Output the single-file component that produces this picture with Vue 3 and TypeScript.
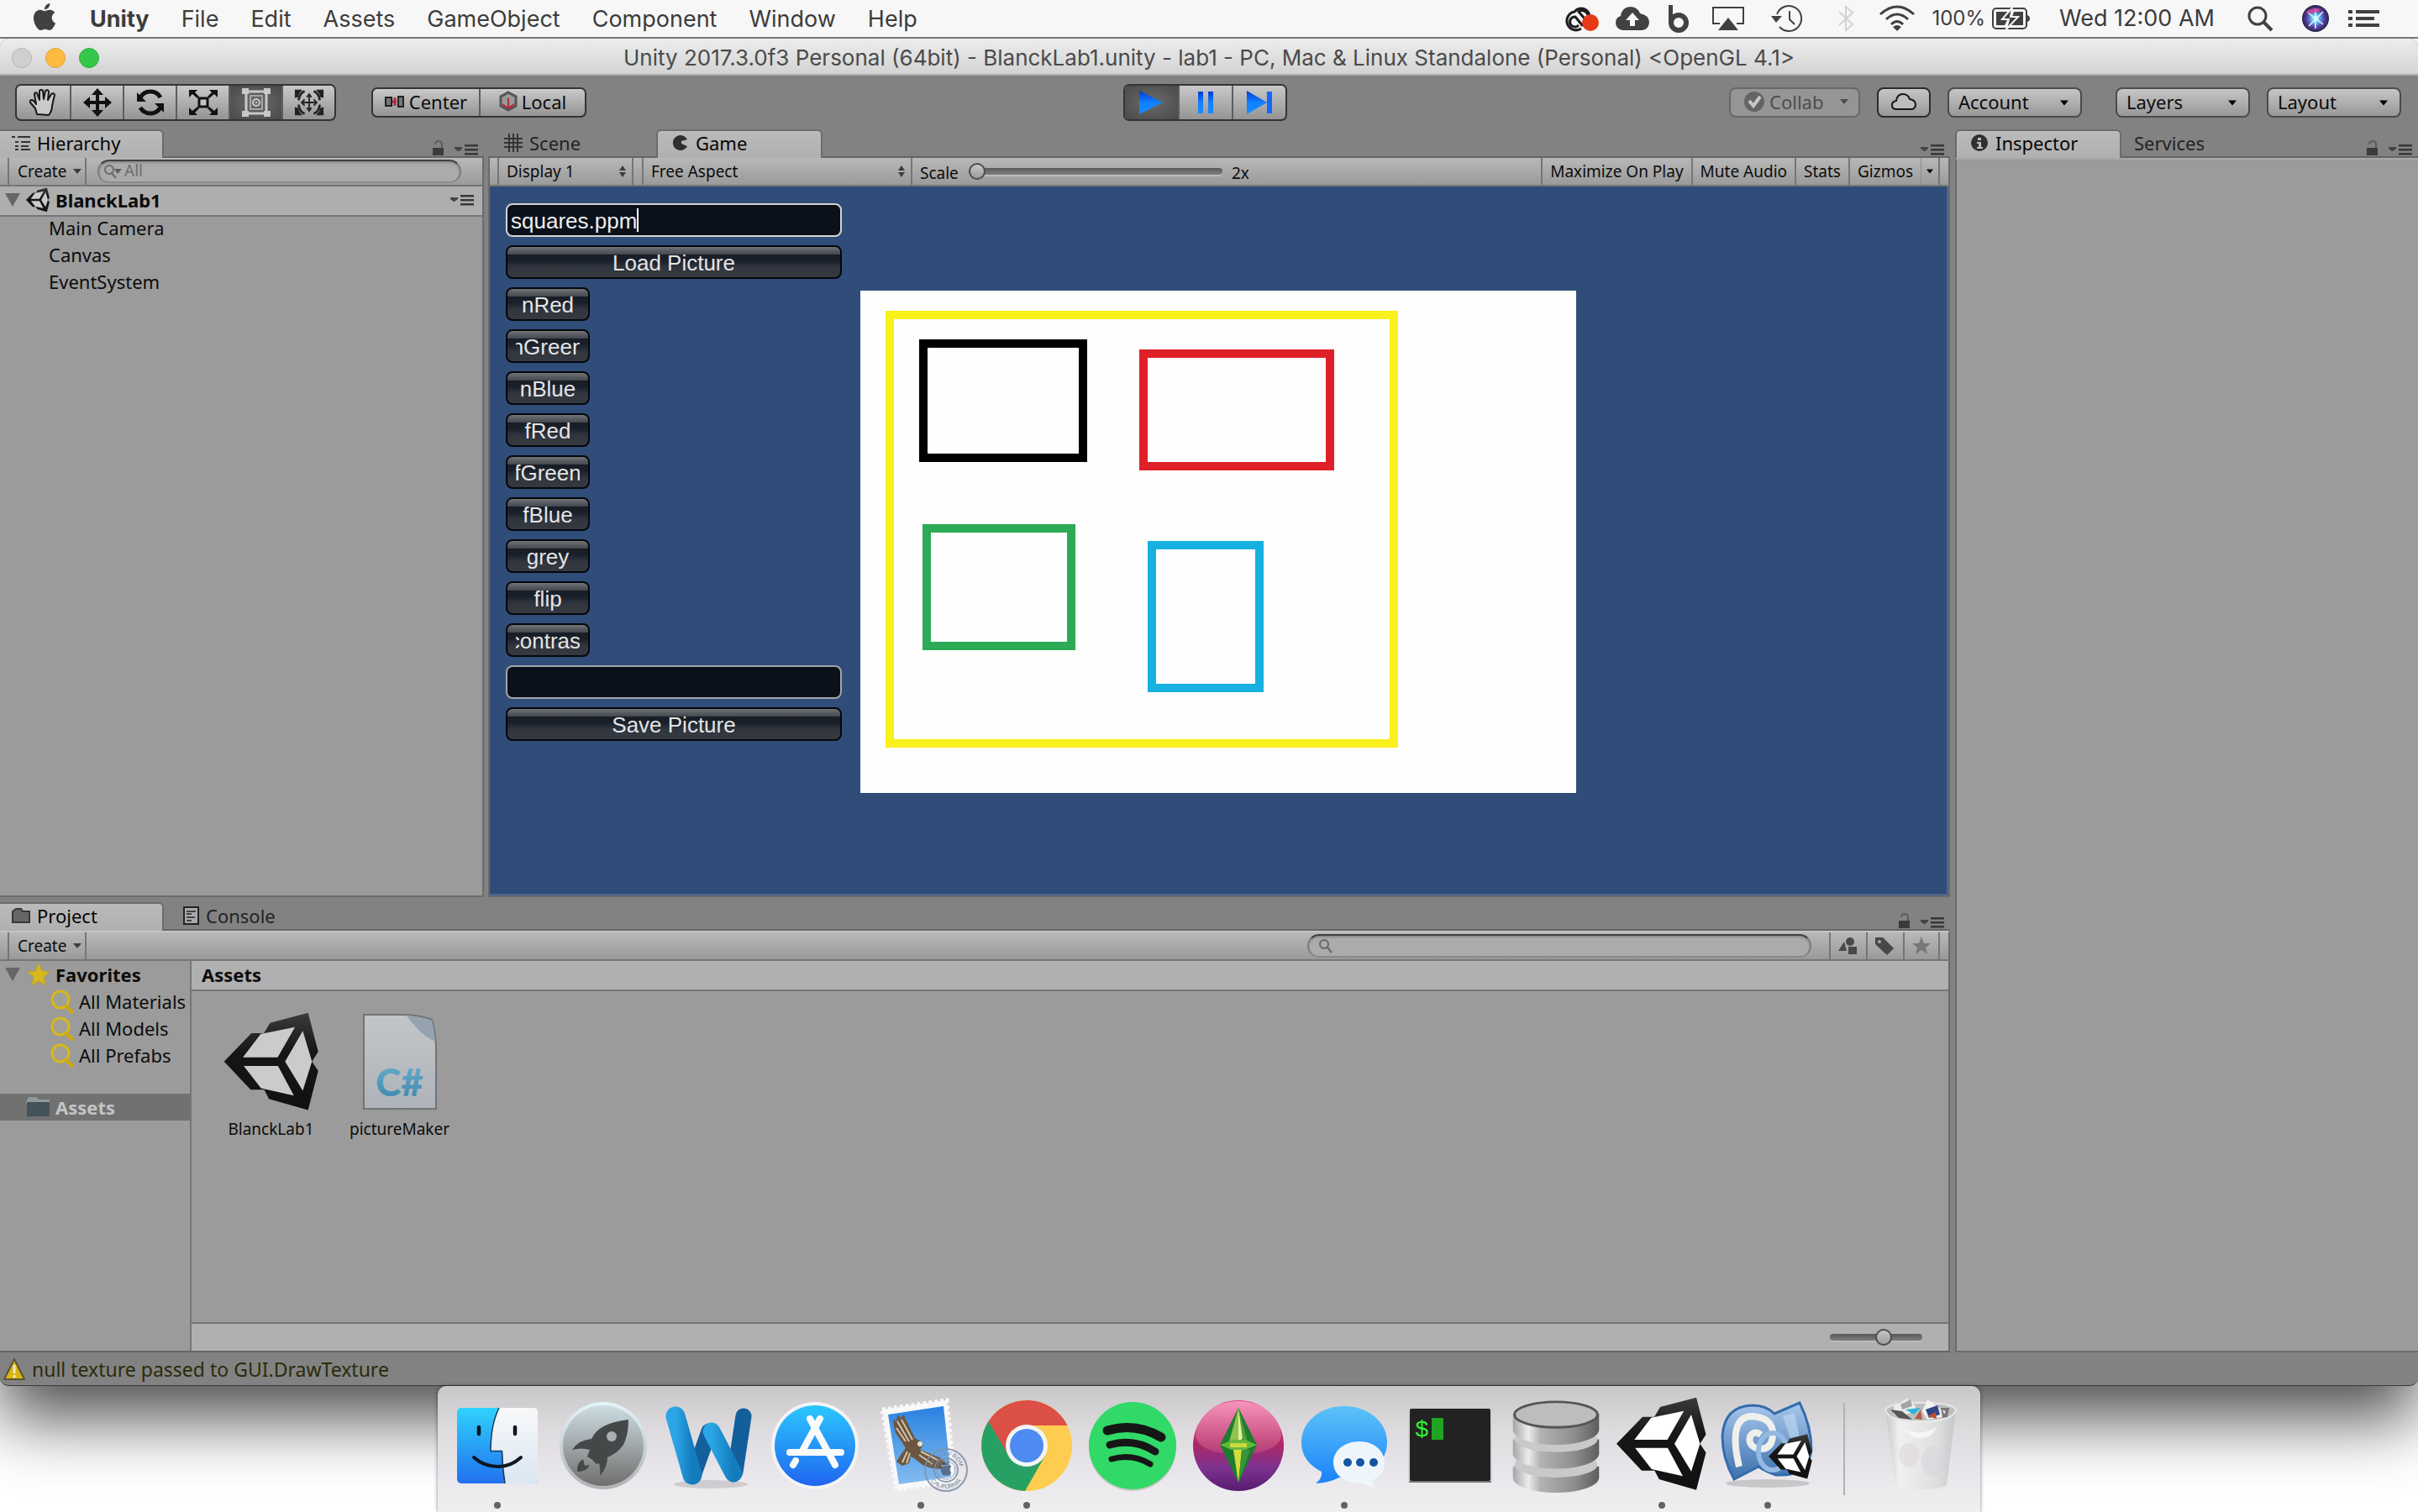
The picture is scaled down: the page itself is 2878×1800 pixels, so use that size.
<script setup lang="ts">
import { ref } from 'vue'

interface DockApp {
  id: string
  name: string
  running: boolean
}

const menus: string[] = ['File', 'Edit', 'Assets', 'GameObject', 'Component', 'Window', 'Help']
const tools: string[] = ['hand', 'move', 'rotate', 'scale', 'rect', 'transform']
const activeTool = ref('rect')
const sceneObjects: string[] = ['Main Camera', 'Canvas', 'EventSystem']
const filters: string[] = ['nRed', 'nGreen', 'nBlue', 'fRed', 'fGreen', 'fBlue', 'grey', 'flip', 'contrast']
const favorites: string[] = ['All Materials', 'All Models', 'All Prefabs']
const gameToggles: string[] = ['Maximize On Play', 'Mute Audio', 'Stats']
const loadName = ref('squares.ppm')
const saveName = ref('')
const zoom = ref(0)
const thumbSize = ref(60)

const apps: DockApp[] = [
  { id: 'finder', name: 'Finder', running: true },
  { id: 'launchpad', name: 'Launchpad', running: false },
  { id: 'word', name: 'Word', running: false },
  { id: 'appstore', name: 'App Store', running: false },
  { id: 'mail', name: 'Mail', running: true },
  { id: 'chrome', name: 'Chrome', running: true },
  { id: 'spotify', name: 'Spotify', running: false },
  { id: 'sims', name: 'The Sims', running: false },
  { id: 'messages', name: 'Messages', running: true },
  { id: 'terminal', name: 'Terminal', running: false },
  { id: 'database', name: 'Database', running: false },
  { id: 'unity', name: 'Unity', running: true },
  { id: 'mono', name: 'MonoDevelop', running: true },
]
</script>

<template>
  <div class="desktop">
    <!-- shared icon shapes -->
    <svg class="sprites" width="0" height="0" aria-hidden="true">
      <defs>
        <linearGradient id="gFinder" x1="0" y1="0" x2="0" y2="1"><stop offset="0" stop-color="#2fd3fd" /><stop offset="1" stop-color="#2270ee" /></linearGradient>
        <linearGradient id="gPale" x1="0" y1="0" x2="0" y2="1"><stop offset="0" stop-color="#f8f8f9" /><stop offset="1" stop-color="#dbe7f3" /></linearGradient>
        <linearGradient id="gLaunch" x1="0" y1="0" x2="0" y2="1"><stop offset="0" stop-color="#cddde3" /><stop offset=".5" stop-color="#a1a7aa" /><stop offset="1" stop-color="#6f6e6b" /></linearGradient>
        <linearGradient id="gRim" x1="0" y1="0" x2="0" y2="1"><stop offset="0" stop-color="#e4f5fa" /><stop offset="1" stop-color="#aeb2b4" /></linearGradient>
        <linearGradient id="gStore" x1="0" y1="0" x2="0" y2="1"><stop offset="0" stop-color="#2bc7fd" /><stop offset="1" stop-color="#1f66f0" /></linearGradient>
        <linearGradient id="gSky" x1="0" y1="0" x2="0" y2="1"><stop offset="0" stop-color="#2a81e2" /><stop offset="1" stop-color="#84bdf0" /></linearGradient>
        <linearGradient id="gSims" x1="0" y1="0" x2="0" y2="1"><stop offset="0" stop-color="#ee3f87" /><stop offset=".5" stop-color="#ad2768" /><stop offset=".74" stop-color="#7c3391" /><stop offset="1" stop-color="#571b70" /></linearGradient>
        <linearGradient id="gGloss" x1="0" y1="0" x2="0" y2="1"><stop offset="0" stop-color="#f5a0c2" stop-opacity=".9" /><stop offset="1" stop-color="#d06a92" stop-opacity=".35" /></linearGradient>
        <linearGradient id="gMsg" x1="0" y1="0" x2="0" y2="1"><stop offset="0" stop-color="#5cc3f8" /><stop offset="1" stop-color="#1b82fb" /></linearGradient>
        <linearGradient id="gMetal" x1="0" y1="0" x2="1" y2="0"><stop offset="0" stop-color="#a5a5a5" /><stop offset=".18" stop-color="#ececec" /><stop offset=".32" stop-color="#b2b2b2" /><stop offset=".7" stop-color="#909090" /><stop offset="1" stop-color="#5d5d5d" /></linearGradient>
        <linearGradient id="gDark" x1="0" y1="0" x2="0" y2="1"><stop offset="0" stop-color="#3a3a3a" /><stop offset=".4" stop-color="#161616" /><stop offset="1" stop-color="#111" /></linearGradient>
        <linearGradient id="gWordA" x1="0" y1="0" x2="1" y2="0"><stop offset="0" stop-color="#2aa5e6" /><stop offset="1" stop-color="#147bbd" /></linearGradient>
        <linearGradient id="gMono" x1="0" y1="0" x2="0" y2="1"><stop offset="0" stop-color="#a9c8ec" /><stop offset="1" stop-color="#3c70ae" /></linearGradient>
        <linearGradient id="gPlay" x1="0" y1="0" x2="0" y2="1"><stop offset="0" stop-color="#0439d6" /><stop offset=".5" stop-color="#1180ff" /><stop offset="1" stop-color="#178cff" /></linearGradient>
        <linearGradient id="gCup" x1="0" y1="0" x2="1" y2="0"><stop offset="0" stop-color="#c6c8ca" /><stop offset=".2" stop-color="#f0f0f0" /><stop offset=".75" stop-color="#dededf" /><stop offset="1" stop-color="#c4c5c7" /></linearGradient>
        <linearGradient id="gSheet" x1="0" y1="0" x2="0" y2="1"><stop offset="0" stop-color="#c3c6c8" /><stop offset="1" stop-color="#adb3b8" /></linearGradient>
        <linearGradient id="gSharp" x1="0" y1="0" x2="0" y2="1"><stop offset="0" stop-color="#69b0cf" /><stop offset="1" stop-color="#3d86aa" /></linearGradient>
        <radialGradient id="gSiri"><stop offset="0" stop-color="#e9fbff" /><stop offset=".3" stop-color="#4fc3e8" /><stop offset=".65" stop-color="#5a3fae" /><stop offset="1" stop-color="#23253f" /></radialGradient>
      </defs>

      <symbol id="unity" viewBox="3 -4 107 114">
        <path fill="url(#gDark)" d="M3 52.700 34 20.700H48L55 9 98 -2.300 109.500 41.700 102.400 52.700 109.500 63.300 98 107.700 53.700 95 48.400 84.700H33Z" />
        <path class="unity-face" d="M24.300 48 44.400 21.700 83.200 13.700 63.600 48ZM25.200 57.700H64L81.900 91.300 44.800 83ZM72 52.700 92 18 102.400 52.700 92 85.700Z" />
      </symbol>
      <symbol id="lock" viewBox="0 0 15 18">
        <path d="M1 9H14V18H1Z" fill="#3b3b3b" />
        <path d="M4 5Q4 1 8 1 12 1 12 5V9" fill="none" stroke="#5c5c5c" stroke-width="2" />
      </symbol>
      <symbol id="pane-menu" viewBox="0 0 28 13">
        <path d="M0 3H9V5L5 8H4L0 5Z" fill="#444" />
        <path d="M12 0H28V2.500H12ZM12 5H28V7.500H12ZM12 10H28V12.500H12Z" fill="#383838" />
      </symbol>
      <symbol id="tri" viewBox="0 0 10 6"><path d="M0 0H10L5 6Z" /></symbol>
      <symbol id="updown" viewBox="0 0 10 14"><path d="M5 0 9 6H1ZM1 8H9L5 14Z" fill="#3c3c3c" /></symbol>
      <symbol id="fold" viewBox="0 0 18 16"><path d="M0 0H18L9 16Z" fill="#666" /></symbol>
      <symbol id="lens" viewBox="0 0 20 20">
        <circle cx="8" cy="8" r="5" fill="none" stroke="#666" stroke-width="2" /><path d="M12 12 17 18" stroke="#666" stroke-width="2" />
      </symbol>
      <symbol id="lens-menu" viewBox="0 0 22 20">
        <circle cx="6" cy="8" r="5" fill="none" stroke="#6a6a6a" stroke-width="2" /><path d="M9 12 14 18" stroke="#6a6a6a" stroke-width="2" /><path d="M12 7H21L16 13Z" fill="#5d5d5d" />
      </symbol>
      <symbol id="gold-lens" viewBox="0 0 28 28">
        <circle cx="12" cy="12" r="10" fill="#a1a097" stroke="#d8b818" stroke-width="3" /><path d="M19 20 26 27" stroke="#d0a808" stroke-width="4" stroke-linecap="round" />
      </symbol>

      <symbol id="t-hand" viewBox="0 0 36 36">
        <path d="M10 32 8 25 2 18Q1 15 4 15 7 16 9 20L7 8Q8 5 10 7L13 15 13 4Q15 2 17 4L18 14 20 4Q23 2 24 5L23 15 27 8Q30 6 31 9L28 22Q28 28 24 33Z" fill="#c9c9c9" stroke="#161616" stroke-width="2" stroke-linejoin="round" />
      </symbol>
      <symbol id="t-move" viewBox="0 0 36 36">
        <path d="M18 1 25 9H20V16H27V11L35 18 27 25V20H20V27H25L18 35 11 27H16V20H9V25L1 18 9 11V16H16V9H11Z" fill="#111" />
      </symbol>
      <symbol id="t-rotate" viewBox="0 0 36 36">
        <path d="M6 12Q10 5 18 5 26 5 30 12" fill="none" stroke="#111" stroke-width="5" /><path d="M2 6V17H13Z" fill="#111" />
        <path d="M30 24Q26 31 18 31 10 31 6 24" fill="none" stroke="#111" stroke-width="5" /><path d="M34 30V19H23Z" fill="#111" />
      </symbol>
      <symbol id="t-scale" viewBox="0 0 36 36">
        <path d="M13 13H23V23H13Z" fill="#c4c4c4" stroke="#111" stroke-width="3" />
        <path d="M1 3H11L8 6 13 11 11 13 5 8 1 12ZM35 3H25L28 6 23 11 25 13 31 8 35 12ZM1 33H11L8 30 13 25 11 23 5 28 1 24ZM35 33H25L28 30 23 25 25 23 31 28 35 24Z" fill="#111" />
      </symbol>
      <symbol id="t-rect" viewBox="0 0 36 36">
        <path d="M6 5H30V31H6Z" fill="none" stroke="#c8c8c8" stroke-width="3" />
        <path d="M11 10H25V26H11Z" fill="none" stroke="#a5a5a5" stroke-width="2" />
        <path d="M1 1H9V8H1ZM27 1H35V8H27ZM1 28H9V35H1ZM27 28H35V35H27Z" fill="#c8c8c8" />
        <circle cx="18" cy="18" r="4" fill="none" stroke="#c8c8c8" stroke-width="2" /><circle cx="18" cy="18" r="1" fill="#ddd" />
      </symbol>
      <symbol id="t-transform" viewBox="0 0 40 36">
        <path d="M1 1H11L7 6 5 11 1 12ZM39 1H29L33 6 35 11 39 12ZM1 35H11L7 30 5 25 1 24ZM39 35H29L33 30 35 25 39 24Z" fill="#222" />
        <path d="M14 3Q7 6 6 15M26 3Q33 6 34 15M14 33Q7 30 6 21M26 33Q33 30 34 21" fill="none" stroke="#222" stroke-width="3" />
        <path d="M20 7V29M10 18H30M17 11 20 7 23 11M17 25 20 29 23 25M14 14 10 18 14 22M26 14 30 18 26 22" fill="none" stroke="#222" stroke-width="2" />
      </symbol>

      <symbol id="d-finder" viewBox="0 0 112 112">
        <rect x="8" y="10" width="96" height="90" rx="5" fill="url(#gFinder)" />
        <path d="M58 10H99Q104 10 104 15V95Q104 100 99 100H65Q62 82 61.500 61.500H48Q48 30 58 10Z" fill="url(#gPale)" />
        <path d="M58 10Q48 30 48 61.500H61.500Q62 82 65 100" fill="none" stroke="#123a5c" stroke-width="1.500" />
        <path d="M34 33V41M77 33V41" stroke="#0d1720" stroke-width="4.500" stroke-linecap="round" />
        <path d="M28 69Q40 80 57 80 72 80 84 69" fill="none" stroke="#0d1720" stroke-width="4" stroke-linecap="round" />
      </symbol>
      <symbol id="d-launchpad" viewBox="0 0 112 112">
        <circle cx="56" cy="55" r="52" fill="url(#gRim)" /><circle cx="56" cy="55" r="48" fill="url(#gLaunch)" />
        <path d="M86 24Q86 42 80 54 73 64 61 69 61 81 52 91 53 82 51 76L48 77 42 71 37 68 40 60Q30 57 19 60 27 48 42 47 50 28 86 24Z" fill="#444849" />
        <circle cx="66" cy="44" r="6" fill="#a9b0b3" /><path d="M32 71Q24 76 25 86 36 86 40 78L34 79Z" fill="#444849" />
      </symbol>
      <symbol id="d-word" viewBox="0 0 112 112">
        <ellipse cx="58" cy="101" rx="44" ry="5" fill="#000" opacity=".12" />
        <path d="M38 88 56 38M87 86 97 20" stroke="#125f9c" stroke-width="19" stroke-linecap="round" />
        <path d="M16 20 36 90" stroke="url(#gWordA)" stroke-width="23" stroke-linecap="round" />
        <path d="M59 38 85 88" stroke="url(#gWordA)" stroke-width="21" stroke-linecap="round" />
      </symbol>
      <symbol id="d-appstore" viewBox="0 0 112 112">
        <circle cx="56" cy="55" r="52" fill="#f2f4f6" /><circle cx="56" cy="55" r="48" fill="url(#gStore)" />
        <path d="M50 23 80 78M62 23 40 63M33 73 30 78M26 63H87" stroke="#f8fafc" stroke-width="8" stroke-linecap="round" />
      </symbol>
      <symbol id="d-mail" viewBox="0 0 112 112">
        <path d="M10 12 87 1 96 97 27 108Z" fill="#f8f8f8" stroke="#f8f8f8" stroke-width="5" stroke-dasharray="4 3" />
        <path d="M17 18 83 8 92 92 30 101Z" fill="url(#gSky)" />
        <path d="M24 32 23 24 27 26 28 18 32 22 36 18 38 24 43 34 49 46 56 50 59 54 55 60 66 64 80 70 88 78 80 78 82 83 70 82 58 78 48 70 44 68 42 76 34 79 27 74 32 66 38 58 33 50 26 40Z" fill="#6d5640" />
        <path d="M28 26 42 50M33 24 46 48M27 34 38 50M56 62 76 72M54 66 70 77M40 62 34 75M43 64 39 76" stroke="#d2c2a4" stroke-width="2" fill="none" />
        <circle cx="55" cy="53" r="3" fill="#e9e2d4" />
        <g fill="none" stroke="#8090a6" opacity=".85">
          <circle cx="86" cy="84" r="25" stroke-width="2" /><circle cx="86" cy="84" r="14" stroke-width="2" /><circle cx="86" cy="84" r="11" />
        </g>
        <path id="stampTop" d="M69 84A17 17 0 0 1 103 84" fill="none" /><path id="stampBottom" d="M64 84A22 22 0 0 0 108 84" fill="none" />
        <g fill="#76859a" font-family="Liberation Sans, sans-serif" font-size="7">
          <text text-anchor="middle"><textPath href="#stampTop" startOffset="50%">HELLO FROM</textPath></text>
          <text text-anchor="middle"><textPath href="#stampBottom" startOffset="50%">CALIFORNIA</textPath></text>
        </g>
        <path d="M86 79Q92 77 92 80 89 84 92 87 90 92 86 90 82 92 80 86 79 78 86 79ZM86 78Q86 75 89 74 89 77 86 78Z" fill="#5d6d88" />
      </symbol>
      <symbol id="d-chrome" viewBox="0 0 112 112">
        <circle cx="56" cy="55" r="54" fill="#fecd4f" />
        <path d="M10.500 26A54 54 0 0 0 54 109L78 67 56 55Z" fill="#27a163" />
        <path d="M10.500 26A54 54 0 0 1 104.500 31H56V55L34 66Z" fill="#dc5047" />
        <circle cx="56" cy="55" r="25" fill="#f4f4f4" /><circle cx="56" cy="55" r="20" fill="#4d8bf3" />
      </symbol>
      <symbol id="d-spotify" viewBox="0 0 112 112">
        <circle cx="56" cy="57" r="52" fill="#000" opacity=".15" /><circle cx="56" cy="55" r="52" fill="#31d968" />
        <g fill="none" stroke="#171616" stroke-linecap="round">
          <path d="M26 37Q60 27 90 45" stroke-width="11" /><path d="M29 54Q58 46 83 62" stroke-width="9" /><path d="M31 71Q56 64 77 77" stroke-width="7" />
        </g>
      </symbol>
      <symbol id="d-sims" viewBox="0 0 112 112">
        <circle cx="56" cy="55" r="54" fill="url(#gSims)" /><path d="M5 45A51 43 0 0 1 107 45Q100 65 56 65 12 65 5 45Z" fill="url(#gGloss)" />
        <path d="M56 10 34 54 56 99 78 54Z" fill="#1e7c2e" /><path d="M56 10 44 54H56Z" fill="#8cc44c" /><path d="M56 10 62 44 56 54Z" fill="#e2efa1" /><path d="M56 10 68 54H62Z" fill="#4ea03a" />
        <path d="M34 54 50 48H64L78 54 64 60H48Z" fill="#63b93c" /><path d="M50 60H60L56 99Z" fill="#d6dc3c" /><path d="M60 60H70L56 99Z" fill="#37963a" /><path d="M46 52H66V57H46Z" fill="#c9da3e" />
      </symbol>
      <symbol id="d-messages" viewBox="0 0 112 112">
        <path d="M56 8C84 8 107 26 107 51S84 95 50 93Q38 99 22 100 30 94 29 86 5 74 5 51C5 26 28 8 56 8Z" fill="url(#gMsg)" />
        <path d="M74 50C91 50 104 61 104 75 104 85 99 92 90 96 90 100 91 103 94 105 87 105 83 102 80 100 60 102 43 91 43 75 43 61 56 50 74 50Z" fill="#eef5fb" />
        <g fill="#15579f"><circle cx="60" cy="75" r="5" /><circle cx="75" cy="75" r="5" /><circle cx="91" cy="75" r="5" /></g>
      </symbol>
      <symbol id="d-terminal" viewBox="0 0 112 112">
        <rect x="7" y="10" width="98" height="88" rx="3" fill="#222" stroke="#d0d0d0" stroke-width="2" /><path d="M7 98H105" stroke="#777" stroke-width="2" />
        <text x="14" y="44" fill="#29f52e" font-family="Liberation Mono, monospace" font-size="28">$</text><path d="M34 22H48V48H34Z" fill="#20a522" />
      </symbol>
      <symbol id="d-database" viewBox="0 -4 112 118">
        <path d="M2 80V94A54 19 0 0 0 110 94V80Z" fill="url(#gMetal)" /><ellipse cx="56" cy="78" rx="52" ry="16" fill="#c9c9c9" />
        <path d="M2 46V64A54 19 0 0 0 110 64V46Z" fill="url(#gMetal)" /><ellipse cx="56" cy="46" rx="52" ry="16" fill="#c9c9c9" />
        <path d="M2 14V34A54 19 0 0 0 110 34V14Z" fill="url(#gMetal)" /><ellipse cx="56" cy="15" rx="52" ry="16" fill="#bdbdbd" stroke="#555" stroke-width="3" />
      </symbol>
      <symbol id="d-unity" viewBox="0 0 112 112"><use href="#unity" x="2" y="-4" width="107" height="114" /></symbol>
      <symbol id="d-mono" viewBox="0 0 112 112">
        <ellipse cx="56" cy="100" rx="50" ry="5" fill="#000" opacity=".15" />
        <path d="M16 95Q2 70 2 44 4 8 38 7 54 7 64 17L94 4Q108 32 108 60 104 92 66 90 54 86 45 80Z" fill="url(#gMono)" stroke="#356cac" stroke-width="3" />
        <path d="M74 20 88 16 94 46 84 50Z" fill="#c3daf3" opacity=".6" />
        <path d="M22 80Q8 20 38 20 64 22 62 44 60 60 46 59 32 56 35 44 40 36 48 42" fill="none" stroke="#efefec" stroke-width="8" />
        <ellipse cx="62" cy="62" rx="17" ry="22" fill="none" stroke="#94b9e2" stroke-width="6" />
        <use href="#unity" x="57" y="40" width="52" height="56" />
      </symbol>
      <symbol id="d-trash" viewBox="0 0 112 112">
        <path d="M14 12 26 101Q28 107 56 107 84 107 87 101L98 12Q94 26 56 26 18 26 14 12Z" fill="url(#gCup)" />
        <path d="M14 12Q20 4 56 4 94 4 98 12 96 26 56 26 16 26 14 12Z" fill="#bdbebf" stroke="#e8e8e8" stroke-width="2" />
        <path d="M24 8 40 -1 50 8 48 14 34 20 24 18Z" fill="#ededed" /><path d="M32 6 44 0 46 8 34 12Z" fill="#a5a5a5" /><path d="M58 14 64 0 78 10 86 20 64 24Z" fill="#f1f1f1" />
        <path d="M20 12 34 14 46 24 30 22Z" fill="#5b5454" /><path d="M38 12 56 10 48 18Z" fill="#27b6d8" /><path d="M49 23 56 12 58 24Z" fill="#b95c3e" /><path d="M62 12 76 7 79 18 66 22Z" fill="#2f4788" /><path d="M64 20 74 15 75 23Z" fill="#b9512e" /><path d="M80 10 90 10 88 21 82 22Z" fill="#777" /><path d="M82 12 86 14 84 18Z" fill="#ddd" />
        <path d="M34 34Q54 46 76 32 66 52 46 44Z" fill="#fafafa" opacity=".8" /><ellipse cx="42" cy="66" rx="12" ry="14" fill="#d9d4d2" opacity=".5" /><ellipse cx="70" cy="74" rx="13" ry="18" fill="#d2d6d9" opacity=".5" />
      </symbol>
    </svg>

    <header class="menubar">
      <svg class="apple" viewBox="0 0 24 24" width="32" height="32" fill="#414141" aria-label="Apple"><path d="M12.152 6.896c-.948 0-2.415-1.078-3.960-1.040-2.040.027-3.910 1.183-4.961 3.014-2.117 3.675-.546 9.103 1.519 12.090 1.013 1.454 2.208 3.090 3.792 3.039 1.520-.065 2.090-.987 3.935-.987 1.831 0 2.350.987 3.960.948 1.637-.026 2.676-1.480 3.676-2.948 1.156-1.688 1.636-3.325 1.662-3.415-.039-.013-3.182-1.221-3.220-4.857-.026-3.040 2.480-4.494 2.597-4.559-1.429-2.090-3.623-2.324-4.390-2.376-2-.156-3.675 1.090-4.610 1.090zM15.530 3.830c.843-1.012 1.400-2.427 1.245-3.830-1.207.052-2.662.805-3.532 1.818-.780.896-1.454 2.338-1.273 3.714 1.338.104 2.715-.688 3.559-1.701" /></svg>
      <nav class="menus">
        <button type="button" class="menu app-name">Unity</button>
        <button v-for="m in menus" :key="m" type="button" class="menu">{{ m }}</button>
      </nav>
      <div class="extras">
        <svg width="41" height="32" viewBox="0 0 41 32"><path d="M30 14A10 10 0 0 0 12 8 11 11 0 1 0 20 28M28 12A7 7 0 0 0 17 8L24 16M22 25 13 14A6 6 0 1 0 17 24" fill="none" stroke="#1d1d1d" stroke-width="3" /><circle cx="31" cy="21" r="10" fill="#e63a16" /></svg>
        <svg width="40" height="32" viewBox="0 0 40 32"><path d="M8 30Q0 28 0 21 0 15 6 13 7 3 17 2 26 2 29 10 40 12 40 21 39 29 32 30Z" fill="#414141" /><path d="M20 9 28 18H23V25H17V18H12Z" fill="#f7f7f7" /></svg>
        <svg width="30" height="36" viewBox="0 0 30 36"><path d="M3 2H8V24H3Z" fill="#414141" /><circle cx="15" cy="23" r="9" fill="none" stroke="#414141" stroke-width="6" /></svg>
        <svg width="48" height="32" viewBox="0 0 48 32"><path d="M14 22H6V3H42V22H34" fill="none" stroke="#414141" stroke-width="2" /><path d="M24 15 36 30H12Z" fill="#414141" /></svg>
        <svg width="54" height="34" viewBox="0 0 54 34"><path d="M14 12A15 15 0 1 1 17 27" fill="none" stroke="#414141" stroke-width="2" /><path d="M7 14H20L13 22Z" fill="#414141" /><path d="M29 8V18L35 24" fill="none" stroke="#414141" stroke-width="2" /></svg>
        <svg width="42" height="34" viewBox="0 0 42 34"><path d="M14 9 30 24 22 31V3L30 10 14 25" fill="none" stroke="#d2d2d2" stroke-width="2" /></svg>
        <svg width="42" height="32" viewBox="0 0 42 32"><g fill="none" stroke="#414141" stroke-width="3"><path d="M1 11Q21 -7 41 11" /><path d="M8 17Q21 5 34 17" /><path d="M14 23Q21 16 28 23" /></g><path d="M21 31 16 26Q21 22 26 26Z" fill="#414141" /></svg>
        <span class="battery">100%
          <svg width="46" height="28" viewBox="0 0 46 28"><rect x="1" y="2" width="40" height="24" rx="4" fill="none" stroke="#414141" stroke-width="2" /><path d="M42 10Q45 11 45 14T42 18Z" fill="#414141" /><path d="M5 6H19L12 16H18L15 22H5ZM26 6H37V22H22L30 12H24Z" fill="#414141" /><path d="M24 1 12 15H20L17 27 31 12H22Z" fill="#414141" stroke="#f7f7f7" stroke-width="2" /></svg>
        </span>
        <time class="clock">Wed 12:00 AM</time>
        <svg width="41" height="32" viewBox="0 0 41 32"><circle cx="17" cy="13" r="10" fill="none" stroke="#414141" stroke-width="3" /><path d="M24 20 34 30" stroke="#414141" stroke-width="4" /></svg>
        <svg width="44" height="34" viewBox="0 0 44 34"><circle cx="25" cy="17" r="16" fill="url(#gSiri)" /><path d="M25 5V29M16 10 34 24M34 9 17 26" stroke="#fff" opacity=".7" stroke-width="2" /><path d="M13 10Q20 3 32 6 27 12 13 10Z" fill="#e0449c" opacity=".8" /></svg>
        <svg width="37" height="22" viewBox="0 0 37 22"><path d="M0 1H5V5H0ZM9 1H37V5H9ZM0 9H5V13H0ZM9 9H31V13H9ZM0 17H5V21H0ZM9 17H37V21H9Z" fill="#414141" /></svg>
      </div>
    </header>

    <main class="window">
      <div class="titlebar">
        <div class="lights"><i class="light off"></i><i class="light min"></i><i class="light max"></i></div>
        <h1>Unity 2017.3.0f3 Personal (64bit) - BlanckLab1.unity - lab1 - PC, Mac &amp; Linux Standalone (Personal) &lt;OpenGL 4.1&gt;</h1>
      </div>

      <div class="toolbar">
        <div class="side">
          <div class="group tools">
            <button v-for="t in tools" :key="t" type="button" :class="{ on: activeTool === t }" :aria-label="t" @click="activeTool = t">
              <svg width="36" height="36"><use :href="'#t-' + t" /></svg>
            </button>
          </div>
          <div class="group pivot">
            <button type="button"><svg width="24" height="16" viewBox="0 0 24 16"><path d="M1 3H8V13H1ZM16 2H22V14H16Z" fill="#777" stroke="#222" stroke-width="2" /><path d="M12 3V13M9 8H14" stroke="#b7283c" stroke-width="3" /></svg>Center</button>
            <button type="button"><svg width="22" height="24" viewBox="0 0 22 24"><path d="M11 1 20 6V17L11 22 2 17V6Z" fill="#999" stroke="#555" stroke-width="3" /><path d="M11 8V20M4 15 11 20 18 15" stroke="#b7283c" stroke-width="2" fill="none" /></svg>Local</button>
          </div>
        </div>
        <div class="group play">
          <button type="button" class="on" aria-label="Play"><svg width="32" height="32" viewBox="0 0 32 32"><path d="M2 2 30 16 2 30Z" fill="url(#gPlay)" /></svg></button>
          <button type="button" aria-label="Pause"><svg width="32" height="32" viewBox="0 0 32 32"><path d="M7 3H13V29H7ZM19 3H25V29H19Z" fill="url(#gPlay)" /></svg></button>
          <button type="button" aria-label="Step"><svg width="32" height="32" viewBox="0 0 32 32"><path d="M1 2 25 16 1 30Z" fill="url(#gPlay)" /><path d="M25 3H31V29H25Z" fill="#1168ff" /></svg></button>
        </div>
        <div class="side end">
          <button type="button" class="btn collab"><svg width="24" height="24" viewBox="0 0 24 24"><circle cx="12" cy="12" r="12" fill="#646464" /><path d="M6 11 11 17 19 6" stroke="#c8c8c8" stroke-width="4" fill="none" /></svg>Collab<svg class="arrow" width="10" height="6"><use href="#tri" /></svg></button>
          <button type="button" class="btn cloud" aria-label="Cloud services"><svg width="30" height="22" viewBox="0 0 30 22"><path d="M6 20Q1 20 1 15 1 11 6 10 7 2 14 2 20 2 22 8 29 9 29 15 28 20 24 20Z" fill="#bdbdbd" stroke="#161616" stroke-width="2" /></svg></button>
          <div class="pick account"><select aria-label="Account"><option>Account</option></select><svg class="arrow" width="10" height="7"><use href="#tri" /></svg></div>
          <div class="pick"><select aria-label="Layers"><option>Layers</option></select><svg class="arrow" width="10" height="7"><use href="#tri" /></svg></div>
          <div class="pick"><select aria-label="Layout"><option>Layout</option></select><svg class="arrow" width="10" height="7"><use href="#tri" /></svg></div>
        </div>
      </div>

      <div class="workspace">
        <div class="left">
          <div class="upper">
            <section class="panel hierarchy">
              <div class="tabs">
                <button type="button" class="tab active first"><svg width="22" height="18" viewBox="0 0 22 18"><path d="M0 1H4V3H0ZM7 1H22V3H7ZM4 7H8V9H4ZM11 7H22V9H11ZM4 12H8V14H4ZM11 12H20V14H11ZM4 16H8V18H4ZM11 16H22V18H11Z" fill="#333" /></svg>Hierarchy</button>
                <div class="tab-tools"><svg width="15" height="18"><use href="#lock" /></svg><svg width="28" height="13"><use href="#pane-menu" /></svg></div>
              </div>
              <div class="bar">
                <button type="button" class="create">Create<svg width="10" height="6"><use href="#tri" /></svg></button>
                <label class="search"><svg width="22" height="20"><use href="#lens-menu" /></svg><input type="search" aria-label="Search hierarchy" placeholder="All" /></label>
              </div>
              <div class="scene-row">
                <svg width="18" height="16"><use href="#fold" /></svg>
                <svg class="grey-face" width="28" height="30"><use href="#unity" /></svg>
                <strong>BlanckLab1</strong>
                <svg class="row-menu" width="28" height="13"><use href="#pane-menu" /></svg>
              </div>
              <ul class="objects"><li v-for="o in sceneObjects" :key="o">{{ o }}</li></ul>
            </section>

            <section class="panel game">
              <div class="tabs">
                <button type="button" class="tab"><svg width="22" height="22" viewBox="0 0 22 22"><path d="M6 0V22M11 0V22M16 0V22M0 6H22M0 11H22M0 16H22" stroke="#333" stroke-width="2" /></svg>Scene</button>
                <button type="button" class="tab active"><svg width="20" height="18" viewBox="0 0 20 18"><path d="M18 5A9 9 0 1 0 18 13L11 10V7Z" fill="#2f2f2f" /></svg>Game</button>
                <div class="tab-tools"><svg width="28" height="13"><use href="#pane-menu" /></svg></div>
              </div>
              <div class="bar">
                <div class="drop display"><select aria-label="Display"><option>Display 1</option></select><svg width="10" height="14"><use href="#updown" /></svg></div>
                <div class="drop aspect"><select aria-label="Aspect"><option>Free Aspect</option></select><svg width="10" height="14"><use href="#updown" /></svg></div>
                <label class="scale" for="scale">Scale</label>
                <input id="scale" v-model="zoom" class="range zoom" type="range" min="0" max="100" />
                <span class="times">2x</span>
                <div class="toggles">
                  <button v-for="t in gameToggles" :key="t" type="button">{{ t }}</button>
                  <button type="button">Gizmos</button>
                  <button type="button" class="caret" aria-label="Gizmos menu"><svg width="8" height="6"><use href="#tri" /></svg></button>
                </div>
              </div>
              <div class="view">
                <div class="controls">
                  <div class="field focused"><input v-model="loadName" type="text" aria-label="Picture to load" :size="9" /><i class="text-caret"></i></div>
                  <button type="button" class="gui wide">Load Picture</button>
                  <button v-for="f in filters" :key="f" type="button" class="gui"><span>{{ f }}</span></button>
                  <div class="field"><input v-model="saveName" type="text" aria-label="Picture to save" /></div>
                  <button type="button" class="gui wide">Save Picture</button>
                </div>
                <svg class="picture" viewBox="0 0 852 598" fill="none" stroke-width="10">
                  <rect width="852" height="598" fill="#fefefe" />
                  <rect x="35" y="29" width="600" height="510" stroke="#f9f01c" />
                  <rect x="75" y="63" width="190" height="136" stroke="#000" />
                  <rect x="337" y="75" width="222" height="134" stroke="#df2029" />
                  <rect x="79" y="283" width="172" height="140" stroke="#2bab56" />
                  <rect x="347" y="303" width="128" height="170" stroke="#16b1e1" />
                </svg>
              </div>
            </section>
          </div>

          <section class="panel project">
            <div class="tabs">
              <button type="button" class="tab active first"><svg width="22" height="18" viewBox="0 0 22 18"><path d="M1 4 5 1H11L13 4H21V17H1Z" fill="#666" stroke="#383838" stroke-width="2" /></svg>Project</button>
              <button type="button" class="tab console"><svg width="19" height="22" viewBox="0 0 19 22"><path d="M1 1H18V21H1Z" fill="#aaa" stroke="#222" stroke-width="2" /><path d="M4 6H15M4 9H10M4 13H14M4 17H10" stroke="#444" stroke-width="2" /></svg>Console</button>
              <div class="tab-tools"><svg width="15" height="18"><use href="#lock" /></svg><svg width="28" height="13"><use href="#pane-menu" /></svg></div>
            </div>
            <div class="bar">
              <button type="button" class="create">Create<svg width="10" height="6"><use href="#tri" /></svg></button>
              <label class="search asset-search"><svg width="20" height="20"><use href="#lens" /></svg><input type="search" aria-label="Search assets" /></label>
              <div class="toggles">
                <button type="button" aria-label="Filter by type"><svg width="22" height="22" viewBox="0 0 22 22"><circle cx="14" cy="6" r="5" fill="#484848" /><path d="M0 17 7 6 10 17ZM12 12H22V21H12Z" fill="#484848" /></svg></button>
                <button type="button" aria-label="Filter by label"><svg width="22" height="22" viewBox="0 0 22 22"><path d="M0 1H9L22 14 14 22 0 9Z" fill="#484848" /><circle cx="5" cy="6" r="2" fill="#aaa" /></svg></button>
                <button type="button" aria-label="Save search"><svg width="22" height="22" viewBox="0 0 22 22"><path d="M11 0 14 8H22L16 13 18 21 11 16 4 21 6 13 0 8H8Z" fill="#777" /></svg></button>
              </div>
            </div>
            <div class="browser">
              <aside class="tree">
                <div class="branch"><svg width="18" height="16"><use href="#fold" /></svg><svg class="star" width="28" height="28" viewBox="0 0 28 28"><path d="M14 1 18 10 27 11 20 17 22 27 14 22 6 27 8 17 1 11 10 10Z" fill="#d6b81f" stroke="#c2a21a" /></svg><strong>Favorites</strong></div>
                <a v-for="f in favorites" :key="f" href="#" class="fav"><svg width="28" height="28"><use href="#gold-lens" /></svg>{{ f }}</a>
                <a href="#" class="branch selected"><svg width="29" height="24" viewBox="0 0 29 24"><path d="M0 6 3 0H13L15 3H28V9H0Z" fill="#8f989b" /><path d="M1 6H28V23H1Z" fill="#44535b" /></svg><strong>Assets</strong></a>
              </aside>
              <div class="assets">
                <div class="crumb">Assets</div>
                <div class="grid">
                  <figure><svg class="grey-face" width="116" height="120"><use href="#unity" /></svg><figcaption>BlanckLab1</figcaption></figure>
                  <figure>
                    <svg width="116" height="120" viewBox="0 0 116 120"><path d="M15 4H63Q84 5 96 10 100 22 101 42V116H15Z" fill="url(#gSheet)" stroke="#6f7478" stroke-width="2" /><path d="M66 5Q86 7 96 11 99 22 100 36 82 28 66 5Z" fill="#95a3b0" /><text x="29" y="101" fill="url(#gSharp)" font-family="Lato, sans-serif" font-weight="900" font-size="46">C#</text></svg>
                    <figcaption>pictureMaker</figcaption>
                  </figure>
                </div>
                <div class="footer"><input v-model="thumbSize" class="range thumbs" type="range" min="0" max="100" aria-label="Thumbnail size" /></div>
              </div>
            </div>
          </section>
        </div>

        <section class="panel inspector">
          <div class="tabs">
            <button type="button" class="tab active"><svg width="21" height="21" viewBox="0 0 21 21"><circle cx="10" cy="10" r="10" fill="#303030" /><path d="M8 4H12V7H8ZM7 9H12V15H14V17H7V15H9V11H7Z" fill="#bbb" /></svg>Inspector</button>
            <button type="button" class="tab plain">Services</button>
            <div class="tab-tools"><svg width="15" height="18"><use href="#lock" /></svg><svg width="28" height="13"><use href="#pane-menu" /></svg></div>
          </div>
          <div class="empty"></div>
        </section>
      </div>

      <footer class="status">
        <svg width="26" height="28" viewBox="0 0 26 28"><path d="M13 2 25 26H1Z" fill="#d8b512" stroke="#5c5438" stroke-width="2" stroke-linejoin="round" /><path d="M13 9V19M13 21V24" stroke="#f2e9c0" stroke-width="3" /></svg>
        null texture passed to GUI.DrawTexture
      </footer>
    </main>

    <nav class="dock" aria-label="Dock">
      <button v-for="a in apps" :key="a.id" type="button" class="dock-item" :aria-label="a.name">
        <svg width="112" height="112"><use :href="'#d-' + a.id" /></svg>
        <i class="dot" :class="{ lit: a.running }"></i>
      </button>
      <i class="divider"></i>
      <button type="button" class="dock-item" aria-label="Trash"><svg width="112" height="112"><use href="#d-trash" /></svg><i class="dot"></i></button>
    </nav>
  </div>
</template>

<style>
body {
  margin: 0;
  background: #fff;
}
</style>

<style scoped>
.desktop,
.desktop * {
  box-sizing: border-box;
}
.desktop {
  min-height: 100vh;
  display: flex;
  flex-direction: column;
  overflow: hidden;
  background: #fff;
  font-family: 'Noto Sans', 'Open Sans', sans-serif;
  font-size: 22px;
  line-height: 32px;
  color: #0c0c0c;
}
.sprites {
  position: absolute;
}
svg {
  display: block;
  flex: none;
  overflow: visible;
}
symbol {
  overflow: visible;
}
.unity-face {
  fill: var(--face, #fff);
}
.grey-face {
  --face: #cbcbcb;
}
button,
select,
input {
  font: inherit;
  color: inherit;
  margin: 0;
  padding: 0;
  border: 0;
  background: none;
  min-width: 0;
  outline: none;
}
button {
  display: flex;
  align-items: center;
  white-space: nowrap;
}
select {
  appearance: none;
  width: 100%;
}

/* menu bar */
.menubar {
  height: 46px;
  padding: 0 46px 4px 37px;
  display: flex;
  align-items: center;
  gap: 38px;
  background: #f7f7f7;
  border-bottom: 2px solid #77777a;
  font-family: Inter, Roboto, sans-serif;
  font-size: 27px;
  color: #3c3c3c;
}
.menus {
  display: flex;
  gap: 38px;
  padding-top: 5px;
}
.app-name {
  font-weight: 700;
}
.extras {
  margin-left: auto;
  padding-top: 4px;
  display: flex;
  align-items: center;
  gap: 20px;
}
.battery {
  display: flex;
  align-items: center;
  gap: 8px;
  font-size: 24px;
}
.clock {
  padding: 0 14px;
}

/* window */
.window {
  flex: 1;
  display: flex;
  flex-direction: column;
  background: #828282;
  border-radius: 10px;
  border-bottom: 1px solid #3c3c3c;
  box-shadow: 0 38px 80px rgba(0, 0, 0, 0.7);
}
.menubar,
.dock {
  position: relative;
  z-index: 1;
}
.titlebar {
  height: 44px;
  padding: 3px 14px 0;
  display: grid;
  grid-template-columns: 1fr auto 1fr;
  align-items: center;
  background: linear-gradient(#ededed, #d3d3d3);
  border-bottom: 2px solid #aeaeae;
  border-radius: 10px 10px 0 0;
}
.titlebar h1 {
  margin: 0;
  font: 400 26px/32px Inter, Roboto, sans-serif;
  color: #4a4a4a;
}
.lights {
  display: flex;
  gap: 16px;
}
.light {
  width: 24px;
  height: 24px;
  border-radius: 50%;
}
.off {
  background: #cfcfcf;
  border: 1px solid #b5b5b5;
}
.min {
  background: #fdbc40;
  border: 1px solid #e0a136;
}
.max {
  background: #34c84a;
  border: 1px solid #2aac3c;
}

.toolbar {
  height: 64px;
  padding: 0 20px 0 18px;
  display: grid;
  grid-template-columns: 1fr auto 1fr;
  align-items: center;
}
.side {
  display: flex;
  align-items: center;
  gap: 42px;
}
.end {
  justify-content: flex-end;
  gap: 20px;
}
.group {
  display: flex;
  border: 2px solid #343434;
  border-radius: 7px;
  overflow: hidden;
  background: linear-gradient(#c9c9c9, #949494);
}
.group button {
  width: 63px;
  height: 40px;
  justify-content: center;
}
.group button + button {
  border-left: 2px solid #5e5e5e;
  width: 64px;
}
.tools button + button {
  width: 63px;
}
.group .on {
  background: radial-gradient(#6c6c6c, #484848);
}
.group.pivot button {
  width: 126px;
  height: 32px;
  gap: 5px;
}
.play {
  margin-right: 8px;
}
.btn,
.pick {
  height: 36px;
  border: 2px solid #4a4a4a;
  border-radius: 8px;
  background: linear-gradient(#c6c6c6, #989898);
}
.collab {
  width: 156px;
  gap: 6px;
  padding: 0 12px 0 16px;
  border-color: #686868;
  background: #959595;
  color: #4d4d4d;
  fill: #4d4d4d;
}
.collab .arrow {
  margin-left: auto;
}
.cloud {
  width: 64px;
  justify-content: center;
  border-color: #2b2b2b;
}
.pick {
  width: 160px;
  display: grid;
  align-items: center;
}
.pick select,
.pick .arrow {
  grid-area: 1 / 1;
}
.pick select {
  height: 32px;
  padding-left: 11px;
}
.pick .arrow {
  justify-self: end;
  margin-right: 14px;
  pointer-events: none;
}
.account {
  margin-right: 20px;
}
.toolbar button,
.toolbar select {
  line-height: 30px;
  padding-bottom: 2px;
}
.group.tools button,
.group.play button {
  padding: 0;
}

/* panels */
.workspace {
  flex: 1;
  display: flex;
  gap: 6px;
}
.left {
  flex: 2321 1 0;
  min-width: 0;
  display: flex;
  flex-direction: column;
  gap: 6px;
}
.upper {
  flex: 914 1 0;
  display: flex;
  gap: 5px;
}
.panel {
  display: flex;
  flex-direction: column;
  min-width: 0;
}
.hierarchy {
  flex: 574 1 0;
  background: #9b9b9b;
  border-right: 2px solid #6b6b6b;
  border-bottom: 2px solid #6b6b6b;
}
.hierarchy .tabs {
  margin-right: -2px;
}
.game {
  flex: 1740 1 0;
}
.project {
  flex: 536 1 0;
}
.inspector {
  flex: 551 1 0;
}
.tabs {
  height: 34px;
  display: flex;
  background: #828282;
  border-bottom: 2px solid #666;
}
.tab {
  width: 200px;
  height: 34px;
  padding: 0 0 4px 17px;
  gap: 8px;
  border: 2px solid transparent;
  border-bottom: 0;
  color: #222;
}
.tab.active {
  width: 198px;
  color: #050505;
  border-color: #6b6b6b;
  border-radius: 6px 6px 0 0;
  background: linear-gradient(#bababa, #b0b0b0);
}
.tab.active.first {
  width: 195px;
  padding-left: 14px;
  border-left: 0;
  border-top-left-radius: 0;
}
.tab.console {
  padding-left: 21px;
}
.tab.plain {
  padding-left: 13px;
}
.tab-tools {
  margin-left: auto;
  padding: 0 7px 1px 0;
  display: flex;
  align-items: flex-end;
  gap: 12px;
}
.bar {
  height: 34px;
  padding-left: 9px;
  display: flex;
  align-items: stretch;
  background: linear-gradient(#b8b8b8, #9a9a9a);
  border-bottom: 2px solid #767676;
  font-size: 19px;
}
.bar button,
.drop {
  border: solid #767676;
  border-width: 0 2px;
}
.create {
  width: 94px;
  padding-left: 9px;
  gap: 8px;
}
.bar .create {
  padding-left: 10px;
}
.create svg {
  fill: #3e3e3e;
}
.search {
  flex: 1;
  height: 28px;
  margin: 2px 25px 0 13px;
  padding-left: 10px;
  display: flex;
  align-items: center;
  border: 2px solid #7c7c7c;
  border-top-color: #404040;
  border-bottom-color: #8b8b8b;
  border-radius: 14px;
  background: #ababab;
  box-shadow: inset 0 2px 2px #8c8c8c;
}
.hierarchy .search {
  padding-left: 6px;
}
.search input {
  flex: 1;
  height: 24px;
  line-height: 22px;
  padding: 0 0 2px 2px;
}
.search input::placeholder {
  color: #6d6d6d;
  opacity: 1;
}
.scene-row {
  height: 36px;
  padding: 0 10px 2px 6px;
  display: flex;
  align-items: center;
  background: #aeaeae;
  border-bottom: 2px solid #767676;
}
.scene-row .grey-face {
  margin: 0 7px;
}
.row-menu {
  margin-left: auto;
}
.objects {
  list-style: none;
  margin: -3px 0 0;
  padding: 0 0 0 58px;
}

/* game */
.game .bar,
.view {
  border-left: 2px solid #6b6b6b;
  border-right: 2px solid #6b6b6b;
}
.drop {
  display: grid;
  align-items: center;
}
.drop select,
.drop svg {
  grid-area: 1 / 1;
}
.drop select {
  height: 32px;
  padding-left: 9px;
}
.drop svg {
  justify-self: end;
  margin-right: 6px;
  pointer-events: none;
}
.display {
  width: 162px;
  margin-right: 10px;
}
.aspect {
  width: 322px;
}
.scale {
  width: 67px;
  padding: 2px 0 0 9px;
}
.times {
  padding: 2px 0 0 11px;
}
.toggles {
  margin-left: auto;
  padding-right: 10px;
  display: flex;
}
.toggles button {
  padding: 0 9px;
  border-right: 0;
}
.toggles button:last-child {
  border-right: 2px solid #767676;
}
.toggles .caret {
  padding: 0 6px;
  border-left: 1px solid #8a8a8a;
}
.range {
  appearance: none;
  align-self: center;
  height: 22px;
}
.range::-webkit-slider-runnable-track {
  height: 8px;
  border-radius: 4px;
  background: linear-gradient(#585858, #808080);
  box-shadow: 0 2px 0 #bcbcbc;
}
.range::-webkit-slider-thumb {
  appearance: none;
  width: 20px;
  height: 20px;
  margin-top: -6px;
  border: 2px solid #4c4c4c;
  border-radius: 50%;
  background: linear-gradient(#c6c6c6, #9e9e9e);
}
.zoom {
  width: 302px;
}
.thumbs {
  width: 110px;
}
.view {
  flex: 1;
  display: flex;
  align-items: flex-start;
  padding: 20px 19px;
  background: #304d79;
  border-bottom: 2px solid #6b6b6b;
  box-shadow: inset 0 -2px #4a6592, inset -2px 0 #4a6592;
}
.controls {
  width: 400px;
  display: flex;
  flex-direction: column;
  gap: 10px;
  font: 26px/36px 'Liberation Sans', Arial, sans-serif;
}
.field {
  height: 40px;
  padding-left: 4px;
  display: flex;
  align-items: center;
  border: 2px solid #a3a5a6;
  border-radius: 8px;
  background: #0a111a;
}
.focused {
  border-color: #d2d4d4;
}
.field input {
  width: 100%;
  height: 32px;
  padding-top: 2px;
  color: #eee;
}
.focused input {
  width: auto;
  field-sizing: content;
}
.text-caret {
  width: 2px;
  height: 28px;
  background: #fff;
}
.gui {
  width: 100px;
  height: 40px;
  padding: 2px 10px 0;
  justify-content: center;
  border: 2px solid #05070a;
  border-radius: 8px;
  color: #e4e4e4;
  background: linear-gradient(#707377 0, #444950 24%, #181e27 25%, #1a202a 45%, #30353e 68%, #343942 100%);
}
.gui span {
  flex: 1;
  min-width: 0;
  display: flex;
  justify-content: center;
  overflow: hidden;
}
.gui.wide {
  width: 100%;
}
.picture {
  flex: 0 1 852px;
  min-width: 0;
  margin: 104px 0 0 22px;
}

/* project */
.project .bar,
.assets {
  border-right: 2px solid #6b6b6b;
}
.project .bar {
  height: 36px;
  border-top: 2px solid #c4c4c4;
}
.search.asset-search {
  flex: 0 1 600px;
  margin: 2px 21px 0 auto;
}
.project .toggles {
  margin: 0;
}
.project .toggles button {
  width: 44px;
}
.browser {
  flex: 1;
  display: flex;
  border-bottom: 2px solid #666;
}
.tree {
  width: 228px;
  background: #9b9b9b;
  border-right: 2px solid #767676;
}
.branch {
  height: 32px;
  display: flex;
  align-items: center;
  padding-left: 6px;
}
.star {
  margin: 0 6px 0 8px;
}
.tree a {
  color: inherit;
  text-decoration: none;
}
.fav {
  height: 32px;
  display: flex;
  align-items: center;
  gap: 6px;
  padding-left: 60px;
  white-space: nowrap;
}
.tree .selected {
  margin-top: 30px;
  padding-left: 31px;
  gap: 6px;
  background: #717171;
  color: #c4c4c4;
}
.assets {
  flex: 1;
  display: flex;
  flex-direction: column;
  background: #9b9b9b;
}
.crumb {
  height: 36px;
  padding-left: 12px;
  background: #b0b0b0;
  border-bottom: 2px solid #767676;
  font-weight: 700;
}
.grid {
  flex: 1;
  padding: 24px 18px;
  display: flex;
}
figure {
  width: 153px;
  margin: 0;
  display: flex;
  flex-direction: column;
  align-items: center;
  gap: 8px;
}
figcaption {
  font-size: 19px;
  line-height: 24px;
}
.footer {
  height: 34px;
  padding-right: 31px;
  display: flex;
  justify-content: flex-end;
  background: #b0b0b0;
  border-top: 2px solid #767676;
}
.empty {
  flex: 1;
  background: #9b9b9b;
  border: 2px solid #6b6b6b;
  border-top-color: #a8a8a8;
  border-right: 0;
}
.status {
  height: 39px;
  padding-left: 4px;
  display: flex;
  align-items: center;
  gap: 8px;
  font-size: 23px;
  color: #2b2b0b;
}

/* dock */
.dock {
  align-self: center;
  padding: 16px 8px 4px;
  display: flex;
  border-radius: 10px 10px 0 0;
  background: linear-gradient(#c8c7c8, #dedbdf 35%, #eae8ec 75%, #efefef);
  box-shadow: 0 0 4px rgba(0, 0, 0, 0.5);
}
.dock-item {
  width: 126px;
  flex-direction: column;
  gap: 10px;
}
.dot {
  width: 8px;
  height: 8px;
  border-radius: 50%;
}
.lit {
  background: #636363;
}
.divider {
  width: 2px;
  height: 110px;
  margin: 4px 27px 0;
  background: #b3b1b4;
}
</style>
